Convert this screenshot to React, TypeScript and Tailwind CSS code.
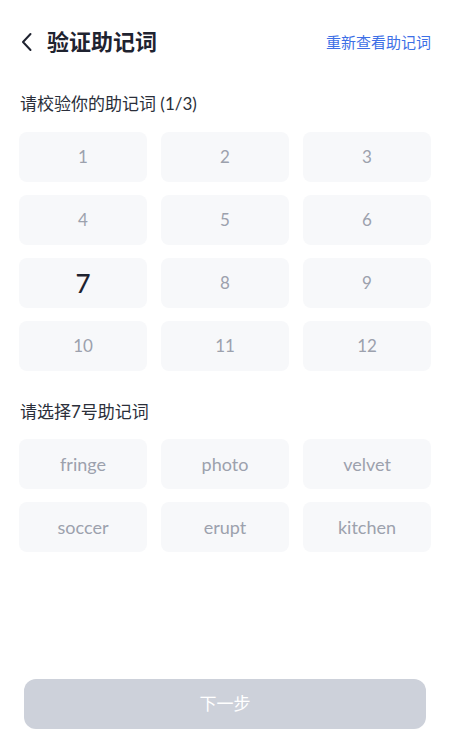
import React from 'react';

const numbers = [1, 2, 3, 4, 5, 6, 7, 8, 9, 10, 11, 12];
const words = ['fringe', 'photo', 'velvet', 'soccer', 'erupt', 'kitchen'];

const font = { fontFamily: 'Lato, "Noto Sans CJK SC", sans-serif' };

const App = () => {
  return (
    <div className="min-h-screen bg-white flex flex-col" style={font}>
      {/* Header */}
      <div className="h-[84px] pl-5 pr-[22px] flex items-center justify-between">
        <div className="flex items-center">
          <svg width="12" height="20" viewBox="0 0 12 20" fill="none" className="ml-[1px]">
            <path d="M9.5 2 L2 10 L9.5 18" stroke="#1f2330" strokeWidth="2" strokeLinecap="round" strokeLinejoin="round" />
          </svg>
          <h1 className="ml-[14px] text-[22px] font-bold text-[#1f2330] leading-none">验证助记词</h1>
        </div>
        <button className="text-[15px] text-[#3d6fe6]">重新查看助记词</button>
      </div>

      {/* Verify */}
      <div className="pl-[19px] pr-[22px]">
        <p className="mt-2 ml-[1px] text-[17px] leading-6 text-[#2b2f3a]">请校验你的助记词 (1/3)</p>
        <div className="mt-4 grid grid-cols-3 gap-x-[14px] gap-y-[13px]">
          {numbers.map((n) => (
            <div
              key={n}
              className="h-[50px] rounded-lg bg-[#f7f8fa] flex items-center justify-center"
            >
              {n === 7 ? (
                <span className="text-[26px] font-medium text-[#1f2330]">{n}</span>
              ) : (
                <span className="text-[17px] text-[#9ca1ad]">{n}</span>
              )}
            </div>
          ))}
        </div>

        <p className="mt-[29px] ml-[1px] text-[17px] leading-6 text-[#2b2f3a]">请选择7号助记词</p>
        <div className="mt-[15px] grid grid-cols-3 gap-x-[14px] gap-y-[13px]">
          {words.map((w) => (
            <div
              key={w}
              className="h-[50px] rounded-lg bg-[#f7f8fa] flex items-center justify-center"
            >
              <span className="text-[18px] text-[#9ca1ad]">{w}</span>
            </div>
          ))}
        </div>
      </div>

      {/* Next */}
      <div className="mt-auto pl-6 pr-[27px] pb-[25px]">
        <button className="w-full h-[50px] rounded-xl bg-[#cdd1da] text-white text-[17px]">
          下一步
        </button>
      </div>
    </div>
  );
};

export default App;
